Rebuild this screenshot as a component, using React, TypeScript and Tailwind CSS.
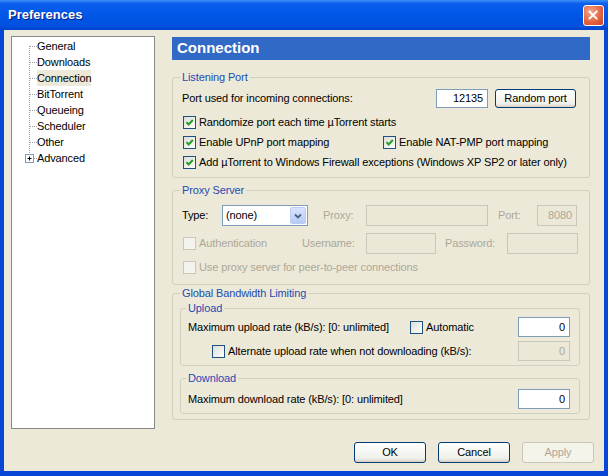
import React from 'react';

const Check: React.FC<{ checked?: boolean; disabled?: boolean }> = ({ checked, disabled }) => (
  <span
    className={`inline-flex items-center justify-center w-[13px] h-[13px] shrink-0 border ${
      disabled
        ? 'border-[#cac8bb] bg-[#f4f3ee]'
        : 'border-[#1c5180] bg-[linear-gradient(135deg,#dcdcd7,#ffffff)]'
    }`}
  >
    {checked && (
      <svg viewBox="0 0 11 11" className="w-[11px] h-[11px]">
        <path d="M2.5 5.2 L4.6 7.5 L8.8 3" stroke="#21a121" strokeWidth="2" fill="none" />
      </svg>
    )}
  </span>
);

const Input: React.FC<{ className: string; value?: string; disabled?: boolean }> = ({ className, value, disabled }) => (
  <div
    className={`flex items-center justify-end pr-[4px] border ${
      disabled ? 'border-[#c9c7ba] bg-[#ebe8d8] text-[#aca899]' : 'border-[#7f9db9] bg-white text-black'
    } ${className}`}
  >
    {value}
  </div>
);

const Button: React.FC<{ label: string; className: string; disabled?: boolean }> = ({ label, className, disabled }) => (
  <div
    className={`flex items-center justify-center rounded-[3px] border ${
      disabled
        ? 'border-[#c9c7ba] bg-[#f5f4ea] text-[#aca899]'
        : 'border-[#003c74] bg-[linear-gradient(to_bottom,#ffffff,#f0f0ea_80%,#d6d0c5)] text-black'
    } ${className}`}
  >
    {label}
  </div>
);

const treeItems = ['General', 'Downloads', 'Connection', 'BitTorrent', 'Queueing', 'Scheduler', 'Other', 'Advanced'];

const App: React.FC = () => {
  return (
    <div className="w-[608px] h-[476px] flex flex-col bg-[#0846d8] font-['Liberation_Sans',Arial,sans-serif] text-[11px] tracking-[-0.12px] text-black">
      {/* Title bar */}
      <div className="h-[30px] shrink-0 flex items-center pl-[8px] pr-[4px] bg-[linear-gradient(to_bottom,#3d8ef8_0%,#0b5eed_12%,#0056e6_50%,#0051e0_85%,#0044cc_100%)]">
        <span className="text-white text-[13px] font-bold tracking-normal [text-shadow:1px_1px_0_#0a1f80]">Preferences</span>
        <div className="ml-auto w-[21px] h-[21px] rounded-[3px] border border-white bg-[radial-gradient(circle_at_35%_30%,#f3a68a,#e2613c_60%,#c8452a)] flex items-center justify-center">
          <svg viewBox="0 0 21 21" className="w-[19px] h-[19px]">
            <path d="M6 6 L14 14 M14 6 L6 14" stroke="white" strokeWidth="2.2" strokeLinecap="round" />
          </svg>
        </div>
      </div>

      {/* Body */}
      <div className="flex-1 mx-[4px] mb-[5px] bg-[#ece9d8] flex flex-col">
        <div className="flex items-start pt-[6px] pl-[7px]">
          {/* Tree */}
          <div className="w-[144px] h-[393px] bg-white border border-[#868a86] pt-[1px] pl-[9px]">
            {treeItems.map((item, i) => (
              <div key={item} className="flex items-center h-[16px]">
                <svg width="16" height="16" className="shrink-0">
                  <line x1="8.5" y1={i === 0 ? 8 : 0} x2="8.5" y2={i === treeItems.length - 1 ? 8 : 16} stroke="#a0a0a0" strokeDasharray="1 1" />
                  <line x1="9" y1="8.5" x2="16" y2="8.5" stroke="#a0a0a0" strokeDasharray="1 1" />
                  {item === 'Advanced' && (
                    <g>
                      <rect x="4.5" y="4.5" width="8" height="8" fill="white" stroke="#7f9db9" />
                      <path d="M6.5 8.5 H10.5 M8.5 6.5 V10.5" stroke="black" />
                    </g>
                  )}
                </svg>
                <span className={`leading-[16px] ${item === 'Connection' ? 'bg-[#ece9d8]' : ''}`}>{item}</span>
              </div>
            ))}
          </div>

          {/* Right panel */}
          <div className="ml-[17px] w-[418px] flex flex-col">
            <div className="mt-[1px] h-[23px] bg-[#3169c6] text-white text-[15px] font-bold tracking-normal flex items-center pl-[5px]">
              Connection
            </div>

            {/* Listening Port */}
            <fieldset className="mt-[11px] border border-[#d0d0bf] rounded-[3px] pl-[9px] pr-[13px] pb-[5px]">
              <legend className="-ml-[2px] px-[2px] leading-[13px] text-[#1f4bb4]">Listening Port</legend>
              <div className="mt-[5px] h-[19px] flex items-center">
                <span className="flex-1">Port used for incoming connections:</span>
                <Input className="w-[52px] h-[19px]" value="12135" />
                <Button label="Random port" className="ml-[7px] w-[81px] h-[19px]" />
              </div>
              <div className="mt-[4px] h-[20px] flex items-center pl-[1px] gap-[3px]">
                <Check checked />
                <span>Randomize port each time µTorrent starts</span>
              </div>
              <div className="h-[20px] flex items-center pl-[1px]">
                <div className="w-[200px] flex items-center gap-[3px]">
                  <Check checked />
                  <span>Enable UPnP port mapping</span>
                </div>
                <div className="flex items-center gap-[3px]">
                  <Check checked />
                  <span>Enable NAT-PMP port mapping</span>
                </div>
              </div>
              <div className="h-[20px] flex items-center pl-[1px] gap-[3px]">
                <Check checked />
                <span>Add µTorrent to Windows Firewall exceptions (Windows XP SP2 or later only)</span>
              </div>
            </fieldset>

            {/* Proxy Server */}
            <fieldset className="mt-[6px] border border-[#d0d0bf] rounded-[3px] pl-[9px] pr-[11px] pb-[7px]">
              <legend className="-ml-[2px] px-[2px] leading-[13px] text-[#1f4bb4]">Proxy Server</legend>
              <div className="mt-[8px] h-[21px] flex items-center">
                <span className="w-[40px]">Type:</span>
                <div className="w-[86px] h-[21px] border border-[#7f9db9] bg-white flex items-center">
                  <span className="flex-1 pl-[3px]">(none)</span>
                  <div className="w-[16px] h-[17px] mr-[1px] rounded-[2px] bg-[linear-gradient(to_bottom,#d8e4fc,#b6cbf7)] border border-[#b9cdf6] flex items-center justify-center">
                    <svg viewBox="0 0 8 6" className="w-[8px] h-[6px]">
                      <path d="M1 1.5 L4 4.5 L7 1.5" stroke="#4d6185" strokeWidth="1.8" fill="none" />
                    </svg>
                  </div>
                </div>
                <span className="ml-[15px] w-[43px] text-[#aca899]">Proxy:</span>
                <Input className="w-[122px] h-[21px]" disabled />
                <span className="ml-[10px] w-[39px] text-[#aca899]">Port:</span>
                <Input className="w-[40px] h-[21px]" value="8080" disabled />
              </div>
              <div className="mt-[7px] h-[21px] flex items-center">
                <div className="w-[120px] flex items-center pl-[1px] gap-[3px] text-[#aca899]">
                  <Check disabled />
                  <span>Authentication</span>
                </div>
                <span className="w-[64px] text-[#aca899]">Username:</span>
                <Input className="w-[70px] h-[21px]" disabled />
                <span className="ml-[9px] w-[62px] text-[#aca899]">Password:</span>
                <Input className="w-[71px] h-[21px]" disabled />
              </div>
              <div className="mt-[3px] h-[20px] flex items-center pl-[1px] gap-[3px] text-[#aca899]">
                <Check disabled />
                <span>Use proxy server for peer-to-peer connections</span>
              </div>
            </fieldset>

            {/* Global Bandwidth Limiting */}
            <fieldset className="mt-[2px] border border-[#d0d0bf] rounded-[3px] pl-[7px] pr-[9px] pb-[5px]">
              <legend className="px-[2px] leading-[13px] text-[#1f4bb4]">Global Bandwidth Limiting</legend>
              <fieldset className="mt-[2px] border border-[#d0d0bf] rounded-[3px] pl-[7px] pr-[9px] pb-[4px]">
                <legend className="-ml-[2px] px-[2px] leading-[13px] text-[#1f4bb4]">Upload</legend>
                <div className="mt-[2px] h-[20px] flex items-center">
                  <span className="w-[222px]">Maximum upload rate (kB/s): [0: unlimited]</span>
                  <Check />
                  <span className="ml-[3px] flex-1">Automatic</span>
                  <Input className="w-[52px] h-[20px]" value="0" />
                </div>
                <div className="mt-[4px] h-[20px] flex items-center">
                  <div className="ml-[24px] flex-1 flex items-center gap-[3px]">
                    <Check />
                    <span>Alternate upload rate when not downloading (kB/s):</span>
                  </div>
                  <Input className="w-[52px] h-[20px]" value="0" disabled />
                </div>
              </fieldset>
              <fieldset className="mt-[6px] border border-[#d0d0bf] rounded-[3px] pl-[7px] pr-[9px] pb-[4px]">
                <legend className="-ml-[2px] px-[2px] leading-[13px] text-[#1f4bb4]">Download</legend>
                <div className="mt-[4px] h-[20px] flex items-center">
                  <span className="flex-1">Maximum download rate (kB/s): [0: unlimited]</span>
                  <Input className="w-[52px] h-[20px]" value="0" />
                </div>
              </fieldset>
            </fieldset>
          </div>
        </div>

        {/* Dialog buttons */}
        <div className="mt-[13px] flex justify-end gap-[12px] pr-[10px]">
          <Button label="OK" className="w-[72px] h-[21px]" />
          <Button label="Cancel" className="w-[72px] h-[21px]" />
          <Button label="Apply" className="w-[72px] h-[21px]" disabled />
        </div>
      </div>
    </div>
  );
};

export default App;
